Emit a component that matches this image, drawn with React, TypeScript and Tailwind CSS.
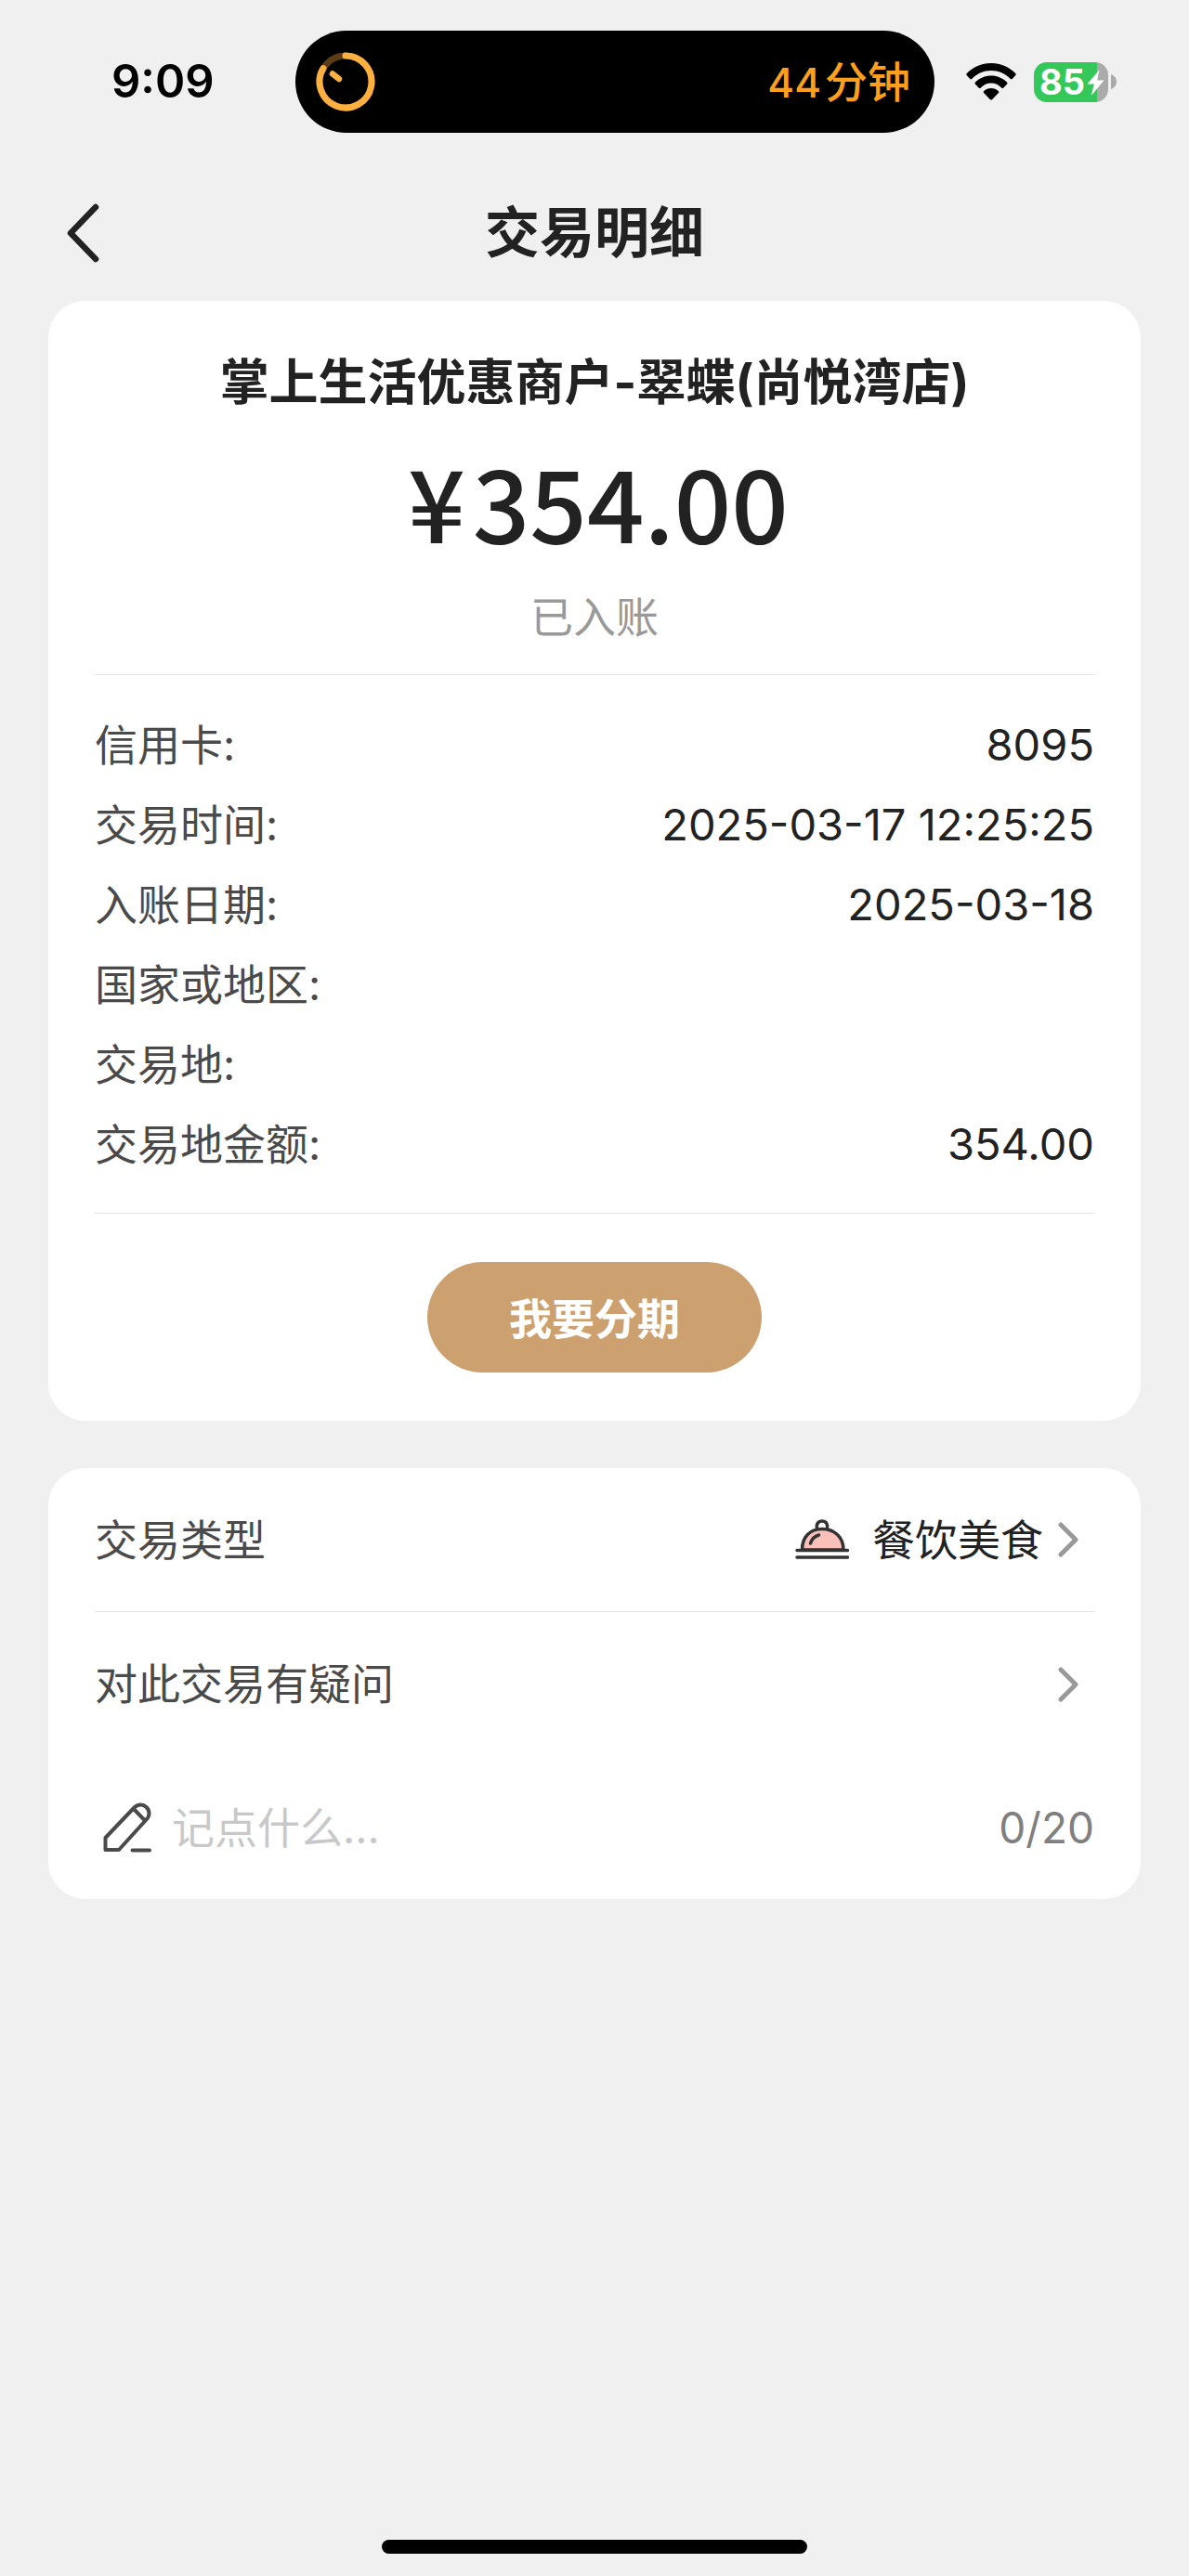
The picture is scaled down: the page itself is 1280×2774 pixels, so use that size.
import React, { useState } from 'react';

interface DetailItem {
  label: string;
  value?: string;
}

const details: DetailItem[] = [
  { label: '信用卡:', value: '8095' },
  { label: '交易时间:', value: '2025-03-17 12:25:25' },
  { label: '入账日期:', value: '2025-03-18' },
  { label: '国家或地区:' },
  { label: '交易地:' },
  { label: '交易地金额:', value: '354.00' },
];

const MAX_NOTE = 20;

const TimerRing: React.FC = () => (
  <svg className="w-16 h-16" viewBox="0 0 64 64" fill="none" strokeLinecap="round">
    <circle cx="32" cy="32" r="28" stroke="#5a3d16" strokeWidth="7" />
    <path d="M32 4A28 28 0 1 1 8 17.6" stroke="#fbb03f" strokeWidth="7" />
    <path d="M18 23.500L25 29" stroke="#fbb03f" strokeWidth="6.500" />
  </svg>
);

const WifiIcon: React.FC = () => (
  <svg className="w-[54px] h-10" viewBox="0 0 54 40" fill="#000">
    <path d="M27 0C37.500 0 46.500 4.200 53.200 11a1.600 1.600 0 0 1 0 2.200l-3.300 3.500a1.600 1.600 0 0 1-2.300 0C42 11.300 35 8 27 8S12 11.300 6.400 16.700a1.600 1.600 0 0 1-2.300 0L.8 13.200a1.600 1.600 0 0 1 0-2.200C7.500 4.200 16.500 0 27 0Z" />
    <path d="M27 13.500c6.600 0 12.600 2.700 17 7a1.600 1.600 0 0 1 0 2.300l-3.600 3.600a1.600 1.600 0 0 1-2.200 0C35.200 23.500 31.300 21.500 27 21.500s-8.200 2-11.200 4.900a1.600 1.600 0 0 1-2.200 0L10 22.800a1.600 1.600 0 0 1 0-2.300c4.400-4.300 10.400-7 17-7Z" />
    <path d="M27 27c3 0 5.700 1.200 7.700 3a1.600 1.600 0 0 1 0 2.300L28.200 39a1.700 1.700 0 0 1-2.400 0l-6.500-6.700a1.600 1.600 0 0 1 0-2.300c2-1.800 4.700-3 7.700-3Z" />
  </svg>
);

const Battery: React.FC = () => (
  <div className="flex items-center gap-[3px]">
    <div className="relative flex items-center w-20 h-[43px] rounded-[14px] bg-linear-to-r from-[#34c759] from-85% to-[#aaaaaa] to-85%">
      <span className="pl-[6px] text-[38px] leading-[48px] font-bold text-white">85</span>
      <svg className="absolute right-[4px] top-[8px] w-[19px] h-[28px]" viewBox="0 0 19 28" fill="#fff">
        <path d="M13.500 0L0.500 15.500h7.300L4.800 28 18.500 11.500h-7.300z" />
      </svg>
    </div>
    <svg className="w-[6px] h-4" viewBox="0 0 6 16" fill="#aaa">
      <path d="M0 0C3.500 1.500 6 4 6 8s-2.500 6.500-6 8z" />
    </svg>
  </div>
);

const StatusBar: React.FC = () => (
  <div className="grid grid-cols-[318fr_688fr_274fr] items-center pt-[33px]">
    <span className="pl-[120px] text-[49px] leading-[60px] font-semibold text-black">9:09</span>
    <div className="flex items-center justify-between h-[110px] pl-[22px] pr-[26px] rounded-full bg-black">
      <TimerRing />
      <div className="flex items-baseline gap-1 leading-[60px] font-medium text-[#fb9f1c]">
        <span className="text-[44px]">44</span>
        <span>分钟</span>
      </div>
    </div>
    <div className="flex items-center gap-[19px] pl-[34px]">
      <WifiIcon />
      <Battery />
    </div>
  </div>
);

const ChevronIcon: React.FC = () => (
  <svg className="w-[22px] h-[38px]" viewBox="0 0 22 38" fill="none" stroke="#999" strokeWidth="5" strokeLinecap="round" strokeLinejoin="round">
    <path d="M3 3L19 19L3 35" />
  </svg>
);

const DishIcon: React.FC = () => (
  <svg className="w-[58px] h-[44px]" viewBox="0 0 58 44" fill="none" stroke="#333" strokeWidth="3.500" strokeLinecap="round">
    <path d="M7.500 33C7.500 19 16 10.500 29 10.500S52 19 52 33Z" fill="#fcc0bb" />
    <path d="M23.500 10C22.500 5 25 2 29 2s6.500 3 5.500 8" />
    <path d="M16.500 26c1.500-5 4-7.500 9-9" />
    <path d="M2 33.500H56.500M2 41H56.500" />
  </svg>
);

const PencilIcon: React.FC = () => (
  <svg className="w-[52px] h-[54px]" viewBox="0 0 52 54" fill="none" stroke="#4a4a4a" strokeWidth="4" strokeLinecap="round" strokeLinejoin="round">
    <path d="M2.500 51V38L33.500 5.500C37.500 1.500 43 1.500 46.500 5C50.500 9 50.500 14.500 46.500 18.500L17 51Z" />
    <path d="M33 7L45 19.500M31.500 51.500H50" />
  </svg>
);

const App: React.FC = () => {
  const [note, setNote] = useState('');

  return (
    <div className="flex flex-col min-h-screen bg-[#f0f0f0] font-['Inter','Noto_Sans_CJK_SC',sans-serif] text-[46px] text-[#4a4a4a]">
      <StatusBar />

      <header className="grid grid-cols-[1fr_auto_1fr] items-center px-[52px] pt-[68px] pb-[33px]">
        <button type="button" aria-label="返回" className="justify-self-start px-[19px]">
          <svg className="w-[36px] h-[64px]" viewBox="0 0 36 64" fill="none" stroke="#222" strokeWidth="6.500" strokeLinecap="round" strokeLinejoin="round">
            <path d="M32 4L5 32L32 60" />
          </svg>
        </button>
        <h1 className="text-[59px] leading-[80px] font-bold text-[#222]">交易明细</h1>
      </header>

      <main className="flex flex-col gap-[51px] px-[52px]">
        <section className="px-[50px] pt-12 pb-[52px] rounded-[40px] bg-white text-center">
          <h2 className="text-[53px] leading-[80px] font-bold text-[#222]">掌上生活优惠商户-翠蝶(尚悦湾店)</h2>
          <p className="flex justify-center gap-2 mt-[26px] pl-2 font-['Noto_Sans_CJK_SC',sans-serif] text-[108px] leading-[120px] font-medium text-[#222]">
            <span>¥</span>
            <span>354.00</span>
          </p>
          <p className="mt-[34px] mb-[30px] leading-[64px] text-[#999]">已入账</p>

          <dl className="pt-8 pb-[31px] border-y border-[#e2e2e2]">
            {details.map((item) => (
              <div key={item.label} className="flex justify-between leading-[86px]">
                <dt>{item.label}</dt>
                <dd className="text-[47px] text-[#222]">{item.value}</dd>
              </div>
            ))}
          </dl>

          <button type="button" className="mt-[52px] pt-[3px] w-[360px] h-[119px] rounded-full bg-[#cca06f] font-bold text-white">
            我要分期
          </button>
        </section>

        <section className="px-[50px] rounded-[40px] bg-white">
          <a href="#category" className="flex items-center h-[155px] pr-[17px] border-b border-[#e2e2e2]">
            <span className="flex-1">交易类型</span>
            <DishIcon />
            <span className="ml-[25px] mr-4 text-[#222]">餐饮美食</span>
            <ChevronIcon />
          </a>
          <a href="#question" className="flex items-center justify-between h-[155px] pr-[17px]">
            <span>对此交易有疑问</span>
            <ChevronIcon />
          </a>
          <div className="flex items-center h-[154px] pl-[9px]">
            <PencilIcon />
            <input
              type="text"
              aria-label="备注"
              maxLength={MAX_NOTE}
              placeholder="记点什么..."
              value={note}
              onChange={(e) => setNote(e.target.value)}
              className="flex-1 min-w-0 ml-[22px] bg-transparent outline-none placeholder:text-[#c8c8c8]"
            />
            <span className="text-[#808080]">{note.length}/{MAX_NOTE}</span>
          </div>
        </section>
      </main>

      <div className="self-center mt-auto mb-6 w-[458px] h-[15px] rounded-full bg-black" />
    </div>
  );
};

export default App;
